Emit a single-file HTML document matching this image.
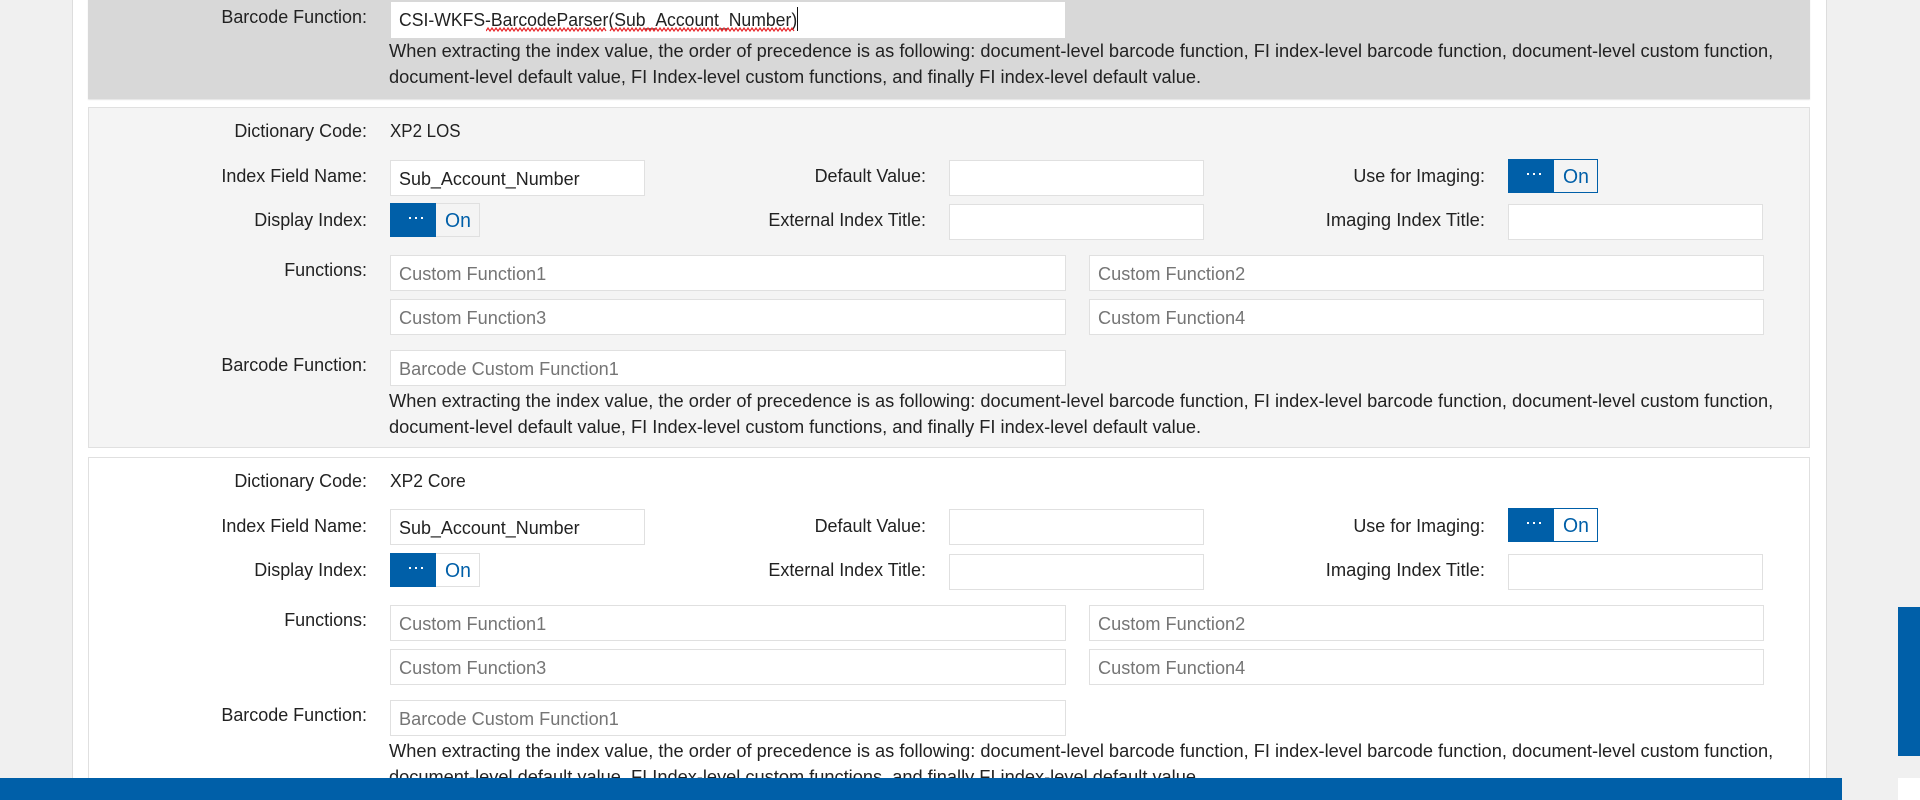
<!DOCTYPE html>
<html><head><meta charset="utf-8"><title>Index Fields</title>
<style>
html,body{margin:0;padding:0;width:1920px;height:800px;overflow:hidden;background:#f0f0f0}
body{position:relative;font-family:"Liberation Sans",sans-serif;font-size:18px;color:#222}
div,span{position:absolute;box-sizing:border-box}
.outer{left:72px;top:0;width:1755px;height:800px;background:#fff;border-left:1px solid #ddd;border-right:1px solid #ddd}
.panel{left:88px;width:1722px;border:1px solid #e0e0e0}
.p2{top:107px;height:341px;background:#f4f4f4}
.p3{top:457px;height:341px;background:#fff}
.p1{top:-243px;height:342px;background:#d8d8d8;border-color:#d8d8d8;box-shadow:0 1px 1px #e4e4e4}
.t{white-space:nowrap;line-height:20px;height:20px;transform:scaleX(.997)}
.l{transform-origin:100% 50%;text-align:right;width:300px}
.c1{left:67px}.c2{left:626px}.c3{left:1185px}
.v{left:390px;transform-origin:0 50%}
.i{background:#fff;border:1px solid #e0e0e0;height:36px;line-height:36px;padding-left:8px;white-space:nowrap}
.i span{position:static;display:inline-block;transform:scaleX(.997);transform-origin:0 50%}
.ph{color:#757575}
.ph span{transform:scaleX(1.008)}
.h{left:389px;transform-origin:0 50%;transform:scaleX(1.012)}
.tg{height:34px;background:transparent;border:1px solid #e0e0e0;width:90px}
.tg.on2{border-color:#005fa8}
.tg b{position:absolute;left:-1px;top:-1px;width:46px;height:34px;background:#005fa8;font-weight:normal}
.tg i{position:absolute;top:13px;width:2px;height:2px;background:#fff}
.tg u{position:absolute;left:54px;top:6px;line-height:22px;color:#005fa8;font-size:20px;text-decoration:none;transform:scaleX(.97);transform-origin:0 50%}
.blue{background:#005fa8}
</style></head><body>
<div class="outer"></div>
<div class="panel p1"></div>
<div class="panel p2"></div>
<div class="panel p3"></div>

<!-- Top panel -->
<div class="t l c1" style="top:7px">Barcode Function:</div>
<div class="i" style="left:391px;top:2px;width:674px;border-color:#fff;line-height:34px;padding-left:7px"><span style="transform:scaleX(.978)">CSI-WKFS-BarcodeParser(Sub_Account_Number)</span></div>
<svg style="position:absolute;left:486px;top:27px" width="311" height="5" viewBox="0 0 311 5"><path d="M0 4 L2 1 L4 4 L6 1 L8 4 L10 1 L12 4 L14 1 L16 4 L18 1 L20 4 L22 1 L24 4 L26 1 L28 4 L30 1 L32 4 L34 1 L36 4 L38 1 L40 4 L42 1 L44 4 L46 1 L48 4 L50 1 L52 4 L54 1 L56 4 L58 1 L60 4 L62 1 L64 4 L66 1 L68 4 L70 1 L72 4 L74 1 L76 4 L78 1 L80 4 L82 1 L84 4 L86 1 L88 4 L90 1 L92 4 L94 1 L96 4 L98 1 L100 4 L102 1 L104 4 L106 1 L108 4 L110 1 L112 4 L114 1 L116 4 L118 1 L120 4 M124 4 L126 1 L128 4 L130 1 L132 4 L134 1 L136 4 L138 1 L140 4 L142 1 L144 4 L146 1 L148 4 L150 1 L152 4 L154 1 L156 4 L158 1 L160 4 L162 1 L164 4 L166 1 L168 4 L170 1 L172 4 L174 1 L176 4 L178 1 L180 4 L182 1 L184 4 L186 1 L188 4 L190 1 L192 4 L194 1 L196 4 L198 1 L200 4 L202 1 L204 4 L206 1 L208 4 L210 1 L212 4 L214 1 L216 4 L218 1 L220 4 L222 1 L224 4 L226 1 L228 4 L230 1 L232 4 L234 1 L236 4 L238 1 L240 4 L242 1 L244 4 L246 1 L248 4 L250 1 L252 4 L254 1 L256 4 L258 1 L260 4 L262 1 L264 4 L266 1 L268 4 L270 1 L272 4 L274 1 L276 4 L278 1 L280 4 L282 1 L284 4 L286 1 L288 4 L290 1 L292 4 L294 1 L296 4 L298 1 L300 4 L302 1 L304 4 L306 1 L308 4" fill="none" stroke="#e8262a" stroke-width="1.2"/></svg>
<div style="left:797px;top:7px;width:1px;height:24px;background:#111"></div>
<div class="t h" style="top:41px">When extracting the index value, the order of precedence is as following: document-level barcode function, FI index-level barcode function, document-level custom function,</div>
<div class="t h" style="top:67px">document-level default value, FI Index-level custom functions, and finally FI index-level default value.</div>

<!-- Panel 2 -->
<div class="t l c1" style="top:121px">Dictionary Code:</div>
<div class="t v" style="top:121px;transform:scaleX(.94)">XP2 LOS</div>
<div class="t l c1" style="top:166px">Index Field Name:</div>
<div class="i" style="left:390px;top:160px;width:255px"><span>Sub_Account_Number</span></div>
<div class="t l c2" style="top:166px">Default Value:</div>
<div class="i" style="left:949px;top:160px;width:255px"></div>
<div class="t l c3" style="top:166px">Use for Imaging:</div>
<div class="tg on2" style="left:1508px;top:159px"><b></b><i style="left:18px"></i><i style="left:24px"></i><i style="left:30px"></i><u>On</u></div>
<div class="t l c1" style="top:210px">Display Index:</div>
<div class="tg" style="left:390px;top:203px"><b></b><i style="left:18px"></i><i style="left:24px"></i><i style="left:30px"></i><u>On</u></div>
<div class="t l c2" style="top:210px">External Index Title:</div>
<div class="i" style="left:949px;top:204px;width:255px"></div>
<div class="t l c3" style="top:210px;transform:scaleX(1.02)">Imaging Index Title:</div>
<div class="i" style="left:1508px;top:204px;width:255px"></div>
<div class="t l c1" style="top:260px">Functions:</div>
<div class="i ph" style="left:390px;top:255px;width:676px"><span>Custom Function1</span></div>
<div class="i ph" style="left:1089px;top:255px;width:675px"><span>Custom Function2</span></div>
<div class="i ph" style="left:390px;top:299px;width:676px"><span>Custom Function3</span></div>
<div class="i ph" style="left:1089px;top:299px;width:675px"><span>Custom Function4</span></div>
<div class="t l c1" style="top:355px">Barcode Function:</div>
<div class="i ph" style="left:390px;top:350px;width:676px"><span>Barcode Custom Function1</span></div>
<div class="t h" style="top:391px">When extracting the index value, the order of precedence is as following: document-level barcode function, FI index-level barcode function, document-level custom function,</div>
<div class="t h" style="top:417px">document-level default value, FI Index-level custom functions, and finally FI index-level default value.</div>

<!-- Panel 3 -->
<div class="t l c1" style="top:471px">Dictionary Code:</div>
<div class="t v" style="top:471px;transform:scaleX(.97)">XP2 Core</div>
<div class="t l c1" style="top:516px">Index Field Name:</div>
<div class="i" style="left:390px;top:509px;width:255px"><span>Sub_Account_Number</span></div>
<div class="t l c2" style="top:516px">Default Value:</div>
<div class="i" style="left:949px;top:509px;width:255px"></div>
<div class="t l c3" style="top:516px">Use for Imaging:</div>
<div class="tg on2" style="left:1508px;top:508px"><b></b><i style="left:18px"></i><i style="left:24px"></i><i style="left:30px"></i><u>On</u></div>
<div class="t l c1" style="top:560px">Display Index:</div>
<div class="tg" style="left:390px;top:553px"><b></b><i style="left:18px"></i><i style="left:24px"></i><i style="left:30px"></i><u>On</u></div>
<div class="t l c2" style="top:560px">External Index Title:</div>
<div class="i" style="left:949px;top:554px;width:255px"></div>
<div class="t l c3" style="top:560px;transform:scaleX(1.02)">Imaging Index Title:</div>
<div class="i" style="left:1508px;top:554px;width:255px"></div>
<div class="t l c1" style="top:610px">Functions:</div>
<div class="i ph" style="left:390px;top:605px;width:676px"><span>Custom Function1</span></div>
<div class="i ph" style="left:1089px;top:605px;width:675px"><span>Custom Function2</span></div>
<div class="i ph" style="left:390px;top:649px;width:676px"><span>Custom Function3</span></div>
<div class="i ph" style="left:1089px;top:649px;width:675px"><span>Custom Function4</span></div>
<div class="t l c1" style="top:705px">Barcode Function:</div>
<div class="i ph" style="left:390px;top:700px;width:676px"><span>Barcode Custom Function1</span></div>
<div class="t h" style="top:741px">When extracting the index value, the order of precedence is as following: document-level barcode function, FI index-level barcode function, document-level custom function,</div>
<div class="t h" style="top:767px">document-level default value, FI Index-level custom functions, and finally FI index-level default value.</div>

<div class="blue" style="left:0;top:778px;width:1842px;height:22px"></div>
<div class="blue" style="left:1898px;top:607px;width:22px;height:149px"></div>
<div style="left:1898px;top:778px;width:22px;height:22px;background:#fff"></div>
</body></html>
